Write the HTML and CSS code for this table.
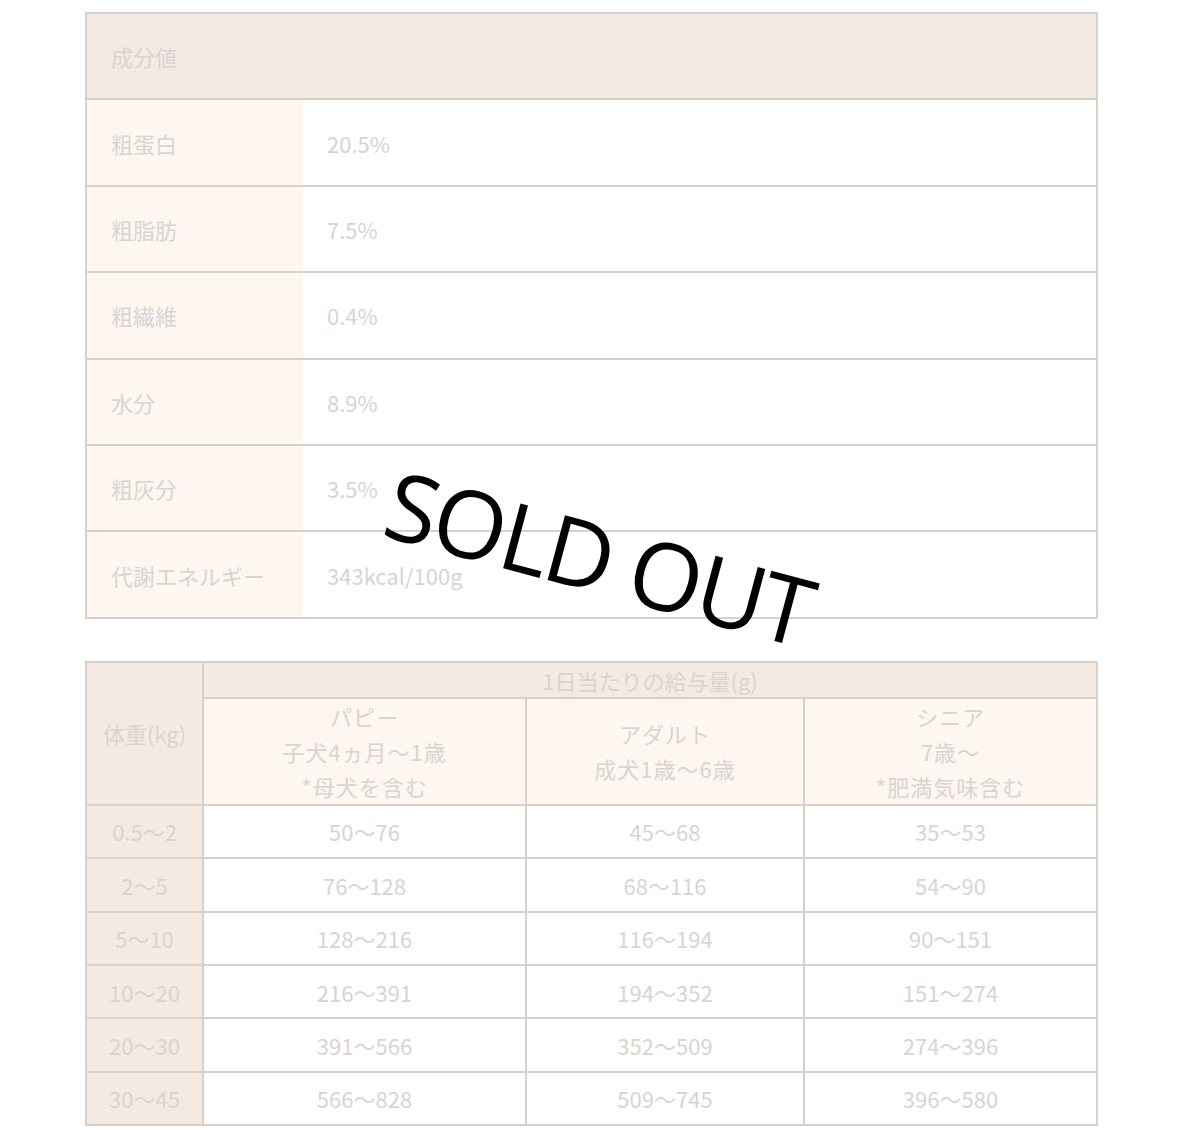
FILE: index.html
```html
<!DOCTYPE html>
<html lang="ja">
<head>
<meta charset="utf-8">
<link rel="stylesheet" href="styles.css">
</head>
<body>
<div class="page">
  <table class="spec">
    <colgroup><col class="spec-c1"><col class="spec-c2"></colgroup>
    <thead>
      <tr><th colspan="2" class="spec-head">成分値</th></tr>
    </thead>
    <tbody>
      <tr><th>粗蛋白</th><td>20.5%</td></tr>
      <tr><th>粗脂肪</th><td>7.5%</td></tr>
      <tr><th>粗繊維</th><td>0.4%</td></tr>
      <tr><th>水分</th><td>8.9%</td></tr>
      <tr><th>粗灰分</th><td>3.5%</td></tr>
      <tr><th>代謝エネルギー</th><td>343kcal/100g</td></tr>
    </tbody>
  </table>

  <table class="feed">
    <colgroup><col class="f0"><col class="f1"><col class="f2"><col class="f3"></colgroup>
    <thead>
      <tr>
        <th rowspan="2" class="weight-head">体重(kg)</th>
        <th colspan="3" class="top-head">1日当たりの給与量(g)</th>
      </tr>
      <tr class="sub">
        <th>パピー<br>子犬4ヵ月〜1歳<br>*母犬を含む</th>
        <th>アダルト<br>成犬1歳〜6歳</th>
        <th>シニア<br>7歳〜<br>*肥満気味含む</th>
      </tr>
    </thead>
    <tbody>
      <tr><th>0.5〜2</th><td>50〜76</td><td>45〜68</td><td>35〜53</td></tr>
      <tr><th>2〜5</th><td>76〜128</td><td>68〜116</td><td>54〜90</td></tr>
      <tr><th>5〜10</th><td>128〜216</td><td>116〜194</td><td>90〜151</td></tr>
      <tr><th>10〜20</th><td>216〜391</td><td>194〜352</td><td>151〜274</td></tr>
      <tr><th>20〜30</th><td>391〜566</td><td>352〜509</td><td>274〜396</td></tr>
      <tr><th>30〜45</th><td>566〜828</td><td>509〜745</td><td>396〜580</td></tr>
    </tbody>
  </table>

  <div class="sold">SOLD OUT</div>
</div>
</body>
</html>
```

FILE: styles.css
```css
html, body {
  margin: 0;
  padding: 0;
  background: #ffffff;
}
.page {
  position: relative;
  width: 1200px;
  height: 1130px;
  padding: 12px 0 0 85px;
  box-sizing: border-box;
  font-family: "Noto Sans CJK JP", "Noto Sans", sans-serif;
  color: #d9d4d1;
  font-size: 22px;
  font-weight: 400;
}
table {
  border-collapse: collapse;
  width: 1013px;
  table-layout: fixed;
}
th, td {
  font-weight: 400;
  border: 2px solid #d8d0ca;
}
.spec-c1 { width: 217px; }
.spec th, .spec td {
  height: 84.4px;
  text-align: left;
  vertical-align: middle;
  padding: 0 0 0 24px;
  border-left: none;
  border-right: none;
}
.spec th:first-child, .spec td:first-child { border-left: 2px solid #d8d0ca; }
.spec th:last-child, .spec td:last-child { border-right: 2px solid #d8d0ca; }
.spec .spec-head {
  background: #f4eae2;
  border-bottom-color: #d6ccc4;
}
.spec tbody th {
  background: #fdf6f1;
}
.spec tbody td {
  background: #ffffff;
}
.feed {
  margin-top: 42px;
}
.f0 { width: 117px; }
.f1 { width: 323px; }
.f2 { width: 278px; }
.feed th, .feed td {
  text-align: center;
  vertical-align: middle;
  padding: 0;
}
.feed .weight-head {
  background: #f4eae2;
}
.feed .top-head {
  background: #f4eae2;
  height: 34px;
  line-height: 30px;
}
.feed .sub th {
  background: #fdf6f1;
  height: 103px;
  line-height: 35px;
  letter-spacing: 1px;
}
.feed tbody th {
  background: #f4eae2;
}
.feed tbody th, .feed tbody td {
  height: 51.4px;
}
.feed tbody td {
  background: #ffffff;
}
.sold {
  position: absolute;
  left: 401px;
  top: 455px;
  font-family: "Open Sans", sans-serif;
  font-size: 94px;
  font-weight: 400;
  line-height: 1;
  color: #000;
  letter-spacing: -3px;
  white-space: nowrap;
  transform: rotate(15deg);
  transform-origin: left top;
}
```
